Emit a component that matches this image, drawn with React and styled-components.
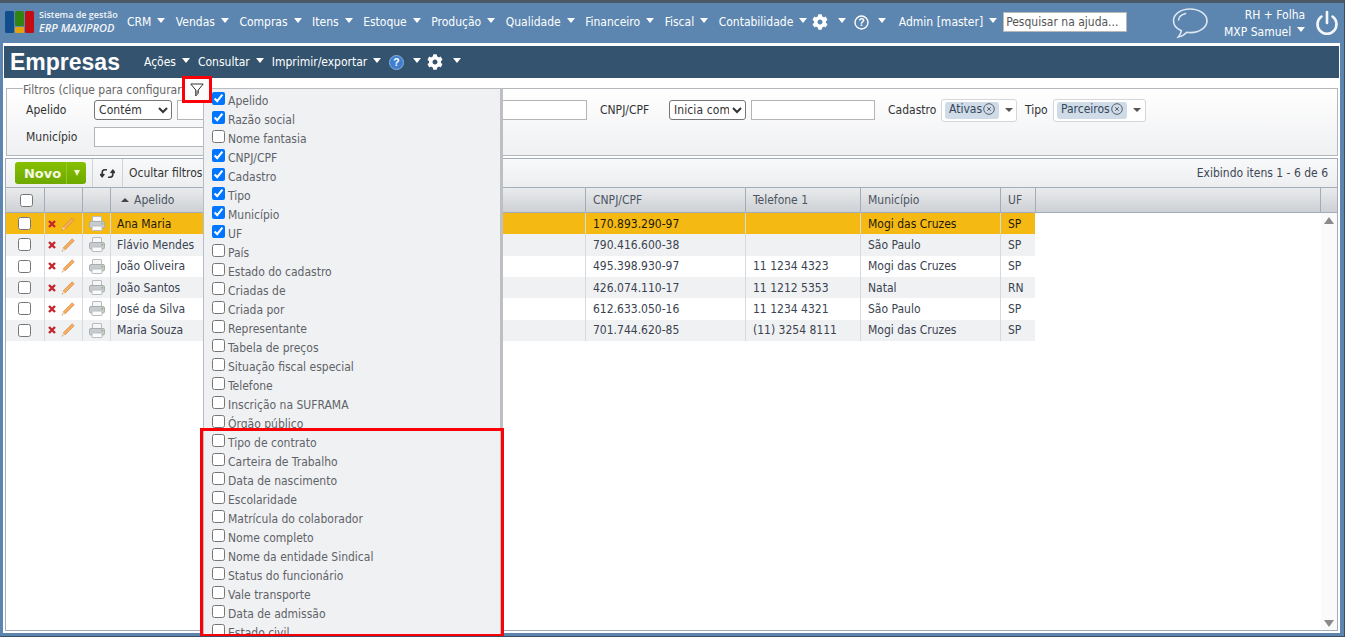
import React from 'react';
import styled, { createGlobalStyle } from 'styled-components';
import { FaCog } from 'react-icons/fa';

const GlobalStyle = createGlobalStyle`
  html, body {
    margin: 0;
    padding: 0;
    height: 100%;
    overflow: hidden;
  }
  * { box-sizing: border-box; }
  body {
    font-family: 'DejaVu Sans', 'Noto Sans', sans-serif;
    font-stretch: condensed;
    font-size: 12px;
    color: #333;
  }
`;

const Page = styled.div`
  position: relative;
  width: 1345px;
  height: 637px;
  display: flex;
  flex-direction: column;
  overflow: hidden;
  background: #5c86b0;
  border-top: 3px solid #4b5966;
  border-right: 1px solid #3c4f62;
  border-bottom: 1px solid #3c4f62;
`;

const TopBar = styled.header`
  height: 40px;
  flex: none;
  display: flex;
  align-items: center;
  padding: 0 0 2px 5px;
  color: #fff;
`;

const Logo = styled.div`
  display: flex;
  align-items: center;
  gap: 4px;
  width: 122px;
  flex: none;
`;

const LogoText = styled.div`
  display: flex;
  flex-direction: column;
  font-size: 9px;
  line-height: 12px;
  font-family: 'Open Sans', sans-serif;
  font-stretch: normal;
  font-weight: 600;
  color: #f2f5f8;
  margin-top: -1px;
  em {
    font-size: 11px;
    line-height: 13px;
  }
`;

const NavList = styled.nav`
  display: flex;
  align-items: center;
  gap: 10.5px;
`;

const NavItem = styled.span`
  display: inline-flex;
  align-items: center;
  gap: ${props => props.$gap || 6}px;
  margin-left: ${props => props.$shift || 0}px;
  white-space: nowrap;
  color: #fff;
`;

const Caret = styled.i`
  display: inline-block;
  width: 0;
  height: 0;
  margin-top: -4px;
  border-left: 4px solid transparent;
  border-right: 4px solid transparent;
  border-top: 5px solid #fff;
`;

const HelpSearch = styled.input`
  width: 124px;
  height: 20px;
  margin-left: 6px;
  padding: 0 1px 0 2px;
  border: 1px solid #b8b8b8;
  background: #fff;
  font: inherit;
  font-stretch: condensed;
  color: #333;
  &::placeholder { color: #555; opacity: 1; }
`;

const ChatIcon = styled.svg`
  margin: 2px 0 0 45px;
  flex: none;
`;

const CompanyBlock = styled.div`
  width: 132px;
  margin: 2px 0 0 -35px;
  flex: none;
  display: flex;
  flex-direction: column;
  align-items: flex-end;
  gap: 1px;
  line-height: 16px;
`;

const PowerIcon = styled.svg`
  margin: 1px 0 0 10px;
  flex: none;
`;

const Frame = styled.main`
  position: relative;
  flex: 1;
  margin: 0 4px 3px 3px;
  background: #fff;
  padding: 3px 2px 2px 2px;
  display: flex;
  flex-direction: column;
  min-height: 0;
`;

const TitleBar = styled.div`
  height: 32px;
  flex: none;
  background: #34536f;
  margin-left: -1px;
  margin-right: -1px;
  display: flex;
  align-items: center;
  padding-left: 6px;
  color: #fff;
`;

const PageTitle = styled.h1`
  margin: 0 24px 0 0;
  font-family: 'Liberation Sans', Arial, sans-serif;
  font-stretch: normal;
  font-size: 23px;
  font-weight: 700;
  line-height: 28px;
`;

const TitleMenu = styled.div`
  display: flex;
  align-items: center;
  gap: 8px;
`;

const FilterBox = styled.fieldset`
  flex: none;
  height: 70px;
  margin: 8px 0 2px 1px;
  padding: 0 0 0 19px;
  border: 1px solid #b3b7bc;
  background: linear-gradient(#ffffff, #eff0f2);
  min-width: 0;
  display: block;
`;

const FilterLegend = styled.legend`
  height: 4px;
  padding: 0 3px 0 0;
  margin-left: -3px;
  color: #666;
  white-space: nowrap;
  line-height: 4px;
  span {
    position: relative;
    top: 2px;
  }
`;

const FilterRow = styled.div`
  display: flex;
  align-items: center;
  height: 22px;
  margin-top: ${props => props.$top || 0}px;
`;

const FilterLabel = styled.label`
  width: ${props => props.$w}px;
  flex: none;
  color: #333;
`;

const NativeSelect = styled.select`
  width: ${props => props.$w}px;
  height: 20px;
  flex: none;
  font: inherit;
  font-stretch: condensed;
  letter-spacing: 0.1px;
  color: #333;
  background: #fff;
  border: 1px solid #767676;
  border-radius: 3px;
  padding: 0;
  margin-right: 5px;
`;

const TextField = styled.input`
  width: ${props => props.$w}px;
  height: 20px;
  flex: none;
  border: 1px solid #b4b4b4;
  background: #fff;
  margin-right: 13px;
`;

const TagSelect = styled.div`
  width: ${props => props.$w}px;
  height: 23px;
  flex: none;
  display: flex;
  align-items: center;
  background: #fff;
  border: 1px solid #d3d6da;
  border-radius: 3px;
  padding-left: 3px;
  margin-right: 8px;
`;

const Tag = styled.span`
  display: inline-flex;
  align-items: center;
  gap: 1px;
  height: 17px;
  padding: 0 4px 2px 4px;
  background: #cfdbe7;
  border-radius: 3px;
  color: #33475b;
`;

const TagCaret = styled.i`
  width: 0;
  height: 0;
  margin-left: 6px;
  border-left: 4px solid transparent;
  border-right: 4px solid transparent;
  border-top: 4px solid #555;
`;

const GridPanel = styled.section`
  flex: 1;
  min-height: 0;
  border: 1px solid #a3adba;
  display: flex;
  flex-direction: column;
`;

const GridToolbar = styled.div`
  height: 28px;
  flex: none;
  display: flex;
  align-items: center;
  background: linear-gradient(#f8f9fa, #eceef0);
  padding-left: 9px;
  color: #333;
`;

const NewButton = styled.div`
  width: 71px;
  height: 22px;
  display: flex;
  align-items: center;
  background: linear-gradient(#87c000, #6da900);
  border-radius: 3px;
  color: #f6f9e6;
  font-family: 'DejaVu Sans', sans-serif;
  font-stretch: normal;
  font-weight: 700;
  font-size: 13px;
  margin-right: 6px;
`;

const NewLabel = styled.span`
  width: 51px;
  text-align: center;
  padding-left: 4px;
`;

const NewArrow = styled.span`
  flex: 1;
  height: 100%;
  border-left: 1px solid #94c63a;
  display: flex;
  align-items: center;
  justify-content: center;
  &::after {
    content: '';
    border-left: 3px solid transparent;
    border-right: 3px solid transparent;
    border-top: 6px solid #f3f7d0;
  }
`;

const ToolDivider = styled.span`
  width: 1px;
  height: 28px;
  background: #cfd2d6;
`;

const ToolButton = styled.span`
  display: inline-flex;
  align-items: center;
  justify-content: center;
  padding: 0 ${props => props.$pad}px;
  white-space: nowrap;
`;

const ItemCount = styled.span`
  margin-left: auto;
  padding-right: 9px;
  color: #3d4754;
`;

const columns = '39px 38px 28px 179px 296px 160px 115px 140px 34px';

const HeaderRow = styled.div`
  height: 26px;
  flex: none;
  display: flex;
  background: linear-gradient(#eaebed, #cdd0d4);
  border-top: 1px solid #a3adba;
  border-bottom: 1px solid #a3adba;
`;

const HeaderCells = styled.div`
  display: grid;
  grid-template-columns: ${columns};
`;

const HeaderCell = styled.div`
  display: flex;
  align-items: center;
  gap: 5px;
  padding-left: ${props => props.$center ? 3 : 7}px;
  justify-content: ${props => props.$center ? 'center' : 'flex-start'};
  border-right: ${props => props.$last ? 0 : '1px solid #a3adba'};
  color: #4a5561;
`;

const HeaderFiller = styled.div`
  flex: 1;
  border-right: 1px solid #a3adba;
  border-left: 1px solid #a3adba;
  margin-right: 16px;
`;

const SortArrow = styled.i`
  margin-left: 3px;
  border-left: 4px solid transparent;
  border-right: 4px solid transparent;
  border-bottom: 4px solid #444;
`;

const GridBody = styled.div`
  flex: 1;
  min-height: 0;
  display: flex;
`;

const Rows = styled.div`
  flex: 1;
`;

const Row = styled.div`
  display: grid;
  grid-template-columns: ${columns};
  width: 1029px;
  height: 21.34px;
  background: ${props => props.$selected ? '#f5b914' : props.$odd ? '#f0f1f3' : '#fff'};
  color: ${props => props.$selected ? '#1f1a08' : '#3a4350'};
`;

const Cell = styled.div`
  display: flex;
  align-items: center;
  padding-left: 7px;
  border-right: 1px solid #d7dadd;
  white-space: nowrap;
  &:last-child { border-right: 0; }
`;

const NameCell = styled(Cell)`
  padding-left: 6px;
`;

const CheckCell = styled(Cell)`
  justify-content: center;
  padding: 0 2px 0 0;
`;

const PrintCell = styled(Cell)`
  justify-content: center;
  padding: 0;
`;

const ActionCell = styled(Cell)`
  gap: 5px;
  padding-left: 3px;
`;

const GridCheck = styled.input`
  margin: 0;
`;

const Scroller = styled.div`
  width: 16px;
  flex: none;
  background: #fbfafb;
  display: flex;
  flex-direction: column;
  justify-content: space-between;
  align-items: center;
  padding: 4px 0 3px;
`;

const ScrollArrow = styled.i`
  border-left: 5px solid transparent;
  border-right: 5px solid transparent;
  border-bottom: ${props => props.$down ? 0 : '7px solid #8a8a8a'};
  border-top: ${props => props.$down ? '7px solid #8a8a8a' : 0};
`;

const FilterPicker = styled.div`
  position: absolute;
  left: 200px;
  top: 45px;
  width: 300px;
  height: 548px;
  overflow: hidden;
  background: #f0f1f3;
  border: 1px solid #b9bdc2;
  border-bottom: 0;
  border-right: 3px solid #bdbfc2;
  padding: 1px 0 0 8px;
  z-index: 2;
`;

const PickerItem = styled.label`
  display: flex;
  align-items: center;
  gap: 3px;
  height: 19px;
  color: #5f6368;
  white-space: nowrap;
  input {
    margin: 0;
    width: 13px;
    height: 13px;
    position: relative;
    top: -1px;
  }
  span {
    position: relative;
    top: 1px;
  }
`;

const Highlight = styled.div`
  position: absolute;
  border: 3px solid #fb0007;
  pointer-events: none;
  z-index: 3;
`;

const IconHighlight = styled(Highlight)`
  left: 179px;
  top: 33px;
  width: 30px;
  height: 27px;
  background: #fbfbfc;
  display: flex;
  align-items: center;
  justify-content: center;
`;

const ListHighlight = styled(Highlight)`
  left: 197px;
  top: 385px;
  width: 304px;
  height: 209px;
`;

const LogoMark = () => (
  <svg width="30" height="23" viewBox="0 0 30 23">
    <rect x="0" y="0" width="9" height="22" rx="1.5" fill="#0f4d8c" />
    <rect x="10" y="0" width="9" height="15" rx="1.5" fill="#2f8412" />
    <rect x="10" y="16" width="9" height="6" rx="1" fill="#e2a30d" />
    <rect x="20" y="0" width="9" height="22" rx="1.5" fill="#c30d12" />
  </svg>
);

const Chat = () => (
  <ChatIcon width="36" height="32" viewBox="0 0 36 32" fill="none" stroke="#dfe8f1" strokeWidth="1.6">
    <path d="M18 2C8.800 2 1.500 7.200 1.500 13.800c0 4.400 3.200 8 7.800 10-.4 2.300-1.400 4.300-3 6.200 3.400-.6 6.500-2.400 8.500-4.700 1.200.2 2.400.3 3.700.3 9.200 0 16.500-5.300 16.500-11.800S27.200 2 18 2z" />
    <path d="M6.500 13c.4-3.200 3.200-5.500 7-6.500" strokeLinecap="round" />
  </ChatIcon>
);

const Power = () => (
  <PowerIcon width="24" height="26" viewBox="0 0 24 26" fill="none" stroke="#f4f7fa" strokeWidth="2.6" strokeLinecap="round">
    <path d="M12 2v11" />
    <path d="M6.500 6.500a9.500 9.500 0 1 0 11 0" />
  </PowerIcon>
);

const HelpOutline = () => (
  <svg width="15" height="15" viewBox="0 0 15 15" fill="none">
    <circle cx="7.500" cy="7.500" r="6.500" stroke="#fff" strokeWidth="1.400" />
    <text x="7.500" y="11" textAnchor="middle" fontSize="10" fontWeight="700" fill="#fff" fontFamily="Liberation Sans">?</text>
  </svg>
);

const HelpBlue = () => (
  <svg width="15" height="15" viewBox="0 0 16 16">
    <circle cx="8" cy="8" r="7.500" fill="#3f7fd0" stroke="#a9c6e8" strokeWidth="0.800" />
    <text x="8" y="12" textAnchor="middle" fontSize="11" fontWeight="700" fill="#fff" fontFamily="Liberation Sans">?</text>
  </svg>
);

const Funnel = () => (
  <svg width="14" height="14" viewBox="0 0 14 14">
    <path d="M.8 1h12.400L8.300 7v3.200L5.700 13V7z" fill="#fff" stroke="#333" strokeWidth="1" strokeLinejoin="round" />
    <path d="M5.800 7.500h2.400v2.700L5.800 12.800z" fill="#8a8a8a" />
  </svg>
);

const TagClose = () => (
  <svg width="12" height="12" viewBox="0 0 12 12" fill="none" stroke="#55606c" strokeWidth="1">
    <circle cx="6" cy="6" r="5.300" />
    <path d="M4.200 4.200l3.600 3.600M7.800 4.200l-3.600 3.600" />
  </svg>
);

const RefreshArrows = () => (
  <svg width="15" height="13" viewBox="0 0 14 12" fill="none" stroke="#333" strokeWidth="1.500">
    <path d="M6.500 2.500H4.500C2.800 2.500 2 3.800 2 5.500V8" />
    <path d="M0 6.500L2 9l2-2.500" fill="#333" />
    <path d="M7.500 9.500h2c1.700 0 2.500-1.300 2.500-3V4" />
    <path d="M10 5.500L12 3l2 2.500" fill="#333" />
  </svg>
);

const DeleteX = () => (
  <svg width="8" height="8" viewBox="0 0 8 8" fill="none" stroke="#c4262b" strokeWidth="2.400">
    <path d="M1 1l6 6M7 1L1 7" />
  </svg>
);

const Pencil = () => (
  <svg width="14" height="14" viewBox="0 0 14 14">
    <path d="M11.200.8l2 2-9.100 9.100-2-2z" fill="#f5ad63" stroke="#d47f2a" strokeWidth="0.600" />
    <path d="M2.100 9.900l2 2-3 1z" fill="#f6dcb6" stroke="#d9b88c" strokeWidth="0.300" />
    <path d="M.8 13.400l1-.3-.7-.7z" fill="#444" />
  </svg>
);

const Printer = () => (
  <svg width="16" height="15" viewBox="0 0 16 15">
    <rect x="3.500" y="0.500" width="9" height="6" rx="0.500" fill="#f6f6f6" stroke="#b9bcbf" />
    <rect x="0.500" y="5.500" width="15" height="6.500" rx="1.500" fill="#c8cbce" stroke="#a9adb1" />
    <rect x="3" y="10" width="10" height="4.500" rx="0.500" fill="#fbfbfb" stroke="#b9bcbf" />
    <rect x="12.500" y="7" width="1.500" height="1.500" fill="#7fbf4d" />
  </svg>
);

const navItems = ['CRM', 'Vendas', 'Compras', 'Itens', 'Estoque', 'Produção', 'Qualidade', 'Financeiro', 'Fiscal', 'Contabilidade'];

const people = [
  { name: 'Ana Maria', doc: '170.893.290-97', phone: '', city: 'Mogi das Cruzes', uf: 'SP' },
  { name: 'Flávio Mendes', doc: '790.416.600-38', phone: '', city: 'São Paulo', uf: 'SP' },
  { name: 'João Oliveira', doc: '495.398.930-97', phone: '11 1234 4323', city: 'Mogi das Cruzes', uf: 'SP' },
  { name: 'João Santos', doc: '426.074.110-17', phone: '11 1212 5353', city: 'Natal', uf: 'RN' },
  { name: 'José da Silva', doc: '612.633.050-16', phone: '11 1234 4321', city: 'São Paulo', uf: 'SP' },
  { name: 'Maria Souza', doc: '701.744.620-85', phone: '(11) 3254 8111', city: 'Mogi das Cruzes', uf: 'SP' },
];

const pickerOptions = [
  ['Apelido', true], ['Razão social', true], ['Nome fantasia', false], ['CNPJ/CPF', true],
  ['Cadastro', true], ['Tipo', true], ['Município', true], ['UF', true], ['País', false],
  ['Estado do cadastro', false], ['Criadas de', false], ['Criada por', false], ['Representante', false],
  ['Tabela de preços', false], ['Situação fiscal especial', false], ['Telefone', false],
  ['Inscrição na SUFRAMA', false], ['Órgão público', false], ['Tipo de contrato', false],
  ['Carteira de Trabalho', false], ['Data de nascimento', false], ['Escolaridade', false],
  ['Matrícula do colaborador', false], ['Nome completo', false], ['Nome da entidade Sindical', false],
  ['Status do funcionário', false], ['Vale transporte', false], ['Data de admissão', false], ['Estado civil', false],
];

export default function App() {
  return (
    <Page>
      <GlobalStyle />
      <TopBar>
        <Logo>
          <LogoMark />
          <LogoText>
            <span>Sistema de gestão</span>
            <em>ERP MAXIPROD</em>
          </LogoText>
        </Logo>
        <NavList>
          {navItems.map(item => (
            <NavItem key={item}>{item}<Caret /></NavItem>
          ))}
          <NavItem $gap={10} $shift={-6}><FaCog size={16} /><Caret /></NavItem>
          <NavItem $gap={9} $shift={-2}><HelpOutline /><Caret /></NavItem>
          <NavItem $shift={2}>Admin [master]<Caret /></NavItem>
        </NavList>
        <HelpSearch placeholder="Pesquisar na ajuda..." />
        <Chat />
        <CompanyBlock>
          <span>RH + Folha</span>
          <NavItem>MXP Samuel<Caret /></NavItem>
        </CompanyBlock>
        <Power />
      </TopBar>

      <Frame>
        <TitleBar>
          <PageTitle>Empresas</PageTitle>
          <TitleMenu>
            <NavItem>Ações<Caret /></NavItem>
            <NavItem>Consultar<Caret /></NavItem>
            <NavItem>Imprimir/exportar<Caret /></NavItem>
            <NavItem $gap={9} $shift={0}><HelpBlue /><Caret /></NavItem>
            <NavItem $gap={10} $shift={-2}><FaCog size={16} /><Caret /></NavItem>
          </TitleMenu>
        </TitleBar>

        <FilterBox>
          <FilterLegend><span>Filtros (clique para configurar)</span></FilterLegend>
          <FilterRow $top={9}>
            <FilterLabel $w={68}>Apelido</FilterLabel>
            <NativeSelect $w={78} defaultValue="Contém"><option>Contém</option></NativeSelect>
            <TextField $w={410} />
            <FilterLabel $w={69}>CNPJ/CPF</FilterLabel>
            <NativeSelect $w={77} defaultValue="Inicia com"><option>Inicia com</option></NativeSelect>
            <TextField $w={124} />
            <FilterLabel $w={53}>Cadastro</FilterLabel>
            <TagSelect $w={76}><Tag>Ativas<TagClose /></Tag><TagCaret /></TagSelect>
            <FilterLabel $w={28}>Tipo</FilterLabel>
            <TagSelect $w={93}><Tag>Parceiros<TagClose /></Tag><TagCaret /></TagSelect>
          </FilterRow>
          <FilterRow $top={5}>
            <FilterLabel $w={68}>Município</FilterLabel>
            <TextField $w={200} />
          </FilterRow>
        </FilterBox>

        <GridPanel>
          <GridToolbar>
            <NewButton><NewLabel>Novo</NewLabel><NewArrow /></NewButton>
            <ToolDivider />
            <ToolButton $pad={7}><RefreshArrows /></ToolButton>
            <ToolDivider />
            <ToolButton $pad={6}>Ocultar filtros</ToolButton>
            <ItemCount>Exibindo itens 1 - 6 de 6</ItemCount>
          </GridToolbar>
          <HeaderRow>
            <HeaderCells>
              <HeaderCell $center><GridCheck type="checkbox" /></HeaderCell>
              <HeaderCell />
              <HeaderCell />
              <HeaderCell><SortArrow />Apelido</HeaderCell>
              <HeaderCell>Razão social</HeaderCell>
              <HeaderCell>CNPJ/CPF</HeaderCell>
              <HeaderCell>Telefone 1</HeaderCell>
              <HeaderCell>Município</HeaderCell>
              <HeaderCell $last>UF</HeaderCell>
            </HeaderCells>
            <HeaderFiller />
          </HeaderRow>
          <GridBody>
            <Rows>
              {people.map((p, i) => (
                <Row key={p.doc} $selected={i === 0} $odd={i % 2 === 1}>
                  <CheckCell><GridCheck type="checkbox" /></CheckCell>
                  <ActionCell><DeleteX /><Pencil /></ActionCell>
                  <PrintCell><Printer /></PrintCell>
                  <NameCell>{p.name}</NameCell>
                  <Cell />
                  <Cell>{p.doc}</Cell>
                  <Cell>{p.phone}</Cell>
                  <Cell>{p.city}</Cell>
                  <Cell>{p.uf}</Cell>
                </Row>
              ))}
            </Rows>
            <Scroller>
              <ScrollArrow />
              <ScrollArrow $down />
            </Scroller>
          </GridBody>
        </GridPanel>

        <IconHighlight><Funnel /></IconHighlight>
        <FilterPicker>
          {pickerOptions.map(([label, checked]) => (
            <PickerItem key={label}>
              <input type="checkbox" defaultChecked={checked} />
              <span>{label}</span>
            </PickerItem>
          ))}
        </FilterPicker>
        <ListHighlight />
      </Frame>
    </Page>
  );
}
